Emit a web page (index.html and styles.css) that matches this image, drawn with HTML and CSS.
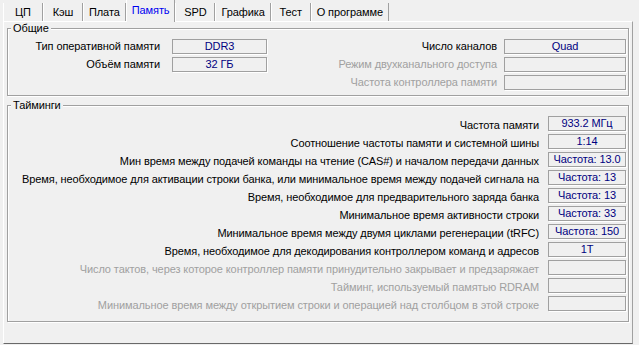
FILE: index.html
```html
<!DOCTYPE html>
<html>
<head>
	<meta charset="UTF-8">
	<title>Память</title>
	<link rel="stylesheet" href="styles.css">
</head>
<body>
	<div class="tabs">
		<div class="tab">ЦП</div>
		<div class="tab">Кэш</div>
		<div class="tab">Плата</div>
		<div class="tab act">Память</div>
		<div class="tab">SPD</div>
		<div class="tab">Графика</div>
		<div class="tab">Тест</div>
		<div class="tab">О программе</div>
	</div>
	<div class="panel">
		<div class="grp gen">
			<div class="gttl">Общие</div>
			<div class="gcol gcl">
				<div class="lbl">Тип оперативной памяти</div>
				<div class="val">DDR3</div>
				<div class="lbl">Объём памяти</div>
				<div class="val">32 ГБ</div>
			</div>
			<div class="gcol gcr">
				<div class="lbl">Число каналов</div>
				<div class="val">Quad</div>
				<div class="lbl off">Режим двухканального доступа</div>
				<div class="val"></div>
				<div class="lbl off">Частота контроллера памяти</div>
				<div class="val"></div>
			</div>
		</div>
		<div class="grp tmg">
			<div class="gttl">Тайминги</div>
			<div class="lbl">Частота памяти</div>
			<div class="val">933.2 МГц</div>
			<div class="lbl">Соотношение частоты памяти и системной шины</div>
			<div class="val">1:14</div>
			<div class="lbl">Мин время между подачей команды на чтение (CAS#) и началом передачи данных</div>
			<div class="val">Частота: 13.0</div>
			<div class="lbl">Время, необходимое для активации строки банка, или минимальное время между подачей сигнала на</div>
			<div class="val">Частота: 13</div>
			<div class="lbl">Время, необходимое для предварительного заряда банка</div>
			<div class="val">Частота: 13</div>
			<div class="lbl">Минимальное время активности строки</div>
			<div class="val">Частота: 33</div>
			<div class="lbl">Минимальное время между двумя циклами регенерации (tRFC)</div>
			<div class="val">Частота: 150</div>
			<div class="lbl">Время, необходимое для декодирования контроллером команд и адресов</div>
			<div class="val">1T</div>
			<div class="lbl off">Число тактов, через которое контроллер памяти принудительно закрывает и предзаряжает</div>
			<div class="val"></div>
			<div class="lbl off">Тайминг, используемый памятью RDRAM</div>
			<div class="val"></div>
			<div class="lbl off">Минимальное время между открытием строки и операцией над столбцом в этой строке</div>
			<div class="val"></div>
		</div>
	</div>
</body>
</html>
```

FILE: styles.css
```css
html, body { margin: 0; padding: 0; height: 100%; }
body { background: #F0F0F0; color: #000; font-family: "Liberation Sans", Arial, sans-serif; font-size: 11px;
	letter-spacing: -0.1px; }

.tabs { display: flex; align-items: flex-end; height: 21px; padding-left: 3px; }
.tab { min-width: 28px; height: 18px; line-height: 18px; padding: 0 5px; text-align: center; white-space: nowrap;
	border-left: 1px solid #FFF; border-right: 1px solid #A0A0A0; }
.tab.act { position: relative; z-index: 2; height: 22px; line-height: 20px; margin-bottom: -1px; color: #0000F0;
	background: #F0F0F0; }

.panel { width: 628px; height: 321px; margin-left: 3px; display: flex; flex-direction: column;
	border: 1px solid; border-color: #FFF #A0A0A0 #696969 #FFF; }

.grp { position: relative; margin: 0 3px; border: 1px solid #A0A0A0; box-shadow: 1px 1px 0 #FFF, inset 1px 1px 0 #FFF; }
.gttl { position: absolute; left: 3px; top: -7px; padding: 0 2px; line-height: 13px; background: #F0F0F0; }

.lbl { height: 15px; line-height: 15px; text-align: right; white-space: nowrap; }
.lbl.off { color: #A0A0A0; }
.val { height: 15px; box-sizing: border-box; line-height: 13px; text-align: center; color: #000080; white-space: nowrap;
	border: 1px solid #A0A0A0; box-shadow: 1px 1px 0 #FFF; }

.gen { display: flex; margin-top: 6px; padding: 10px 2px 5px 0; }
.gcol { display: grid; row-gap: 3px; align-content: start; }
.gcl { width: 259px; grid-template-columns: 1fr 95px; column-gap: 12px; }
.gcr { flex: 1; grid-template-columns: 1fr 122px; column-gap: 7px; }

.tmg { display: grid; grid-template-columns: 1fr 78px; column-gap: 9px; row-gap: 3px; margin-top: 9px;
	padding: 10px 2px 10px 0; }
.tmg .lbl { line-height: 19px; }
```
